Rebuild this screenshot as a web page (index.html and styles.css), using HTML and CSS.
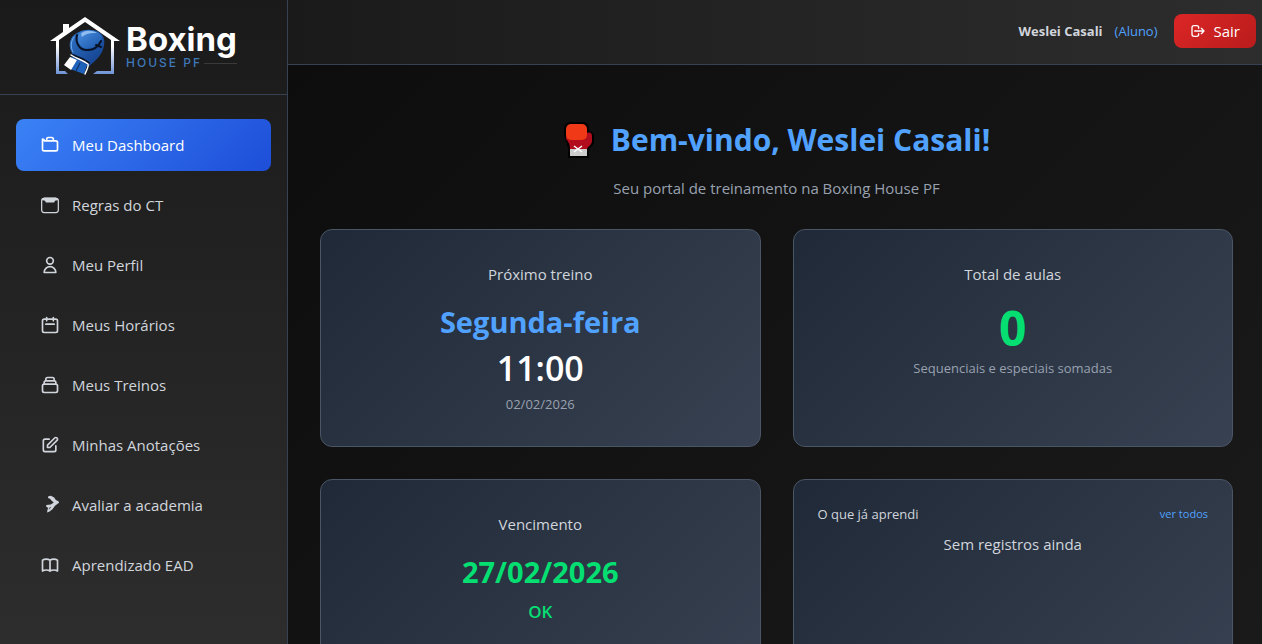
FILE: index.html
```html
<!DOCTYPE html>
<html lang="pt-BR">
<head>
    <meta charset="UTF-8">
    <meta name="viewport" content="width=device-width, initial-scale=1.0">
    <title>Boxing House PF</title>
    <link rel="stylesheet" href="styles.css">
</head>
<body>
    <div class="layout">
        <aside class="sidebar">
            <a href="#" class="logo">
                <svg class="logo-mark" viewBox="0 0 70 60" aria-hidden="true">
                    <defs>
                        <linearGradient id="house" x1="0" y1="0" x2="0" y2="1">
                            <stop offset="0.5" stop-color="#ffffff"/>
                            <stop offset="1" stop-color="#6f93d6"/>
                        </linearGradient>
                        <linearGradient id="glove" x1="0" y1="0" x2="1" y2="1">
                            <stop offset="0" stop-color="#2f74c8"/>
                            <stop offset="1" stop-color="#103a86"/>
                        </linearGradient>
                        <linearGradient id="knuckles" x1="0" y1="0" x2="1" y2="1">
                            <stop offset="0" stop-color="#4a90e0"/>
                            <stop offset="1" stop-color="#1a54a8"/>
                        </linearGradient>
                    </defs>
                    <path fill="url(#house)" d="M35 0 L70 24 H64 V57 H43 L47 54 H61 V23 L35 5 L9 23 V54 H15 L18 57 H6 V24 H0 L13 15 V7 H19 V11 Z"/>
                    <path fill="url(#glove)" d="M27 16 C20 19 18 28 21 34 C23 37 22 39 21 41 L38 50 C45 44 53 38 54 28 C55 24 54 19 50 16 C45 12 34 12 29 15 Z"/>
                    <path fill="url(#knuckles)" d="M28 19 C30 12 45 12 50 17 C53 20 52 25 48 28 C43 32 35 33 31 29 C28 27 27 23 28 19 Z"/>
                    <path fill="#8fbdf2" d="M31 17 C34 13 42 13 47 16 C42 16 36 16 32 20 Z"/>
                    <path fill="none" stroke="#081226" stroke-width="2" stroke-linecap="round" stroke-linejoin="round" d="M27 18 C25 26 30 34 38 33 C43 33 48 30 51 24 M46 28 L51 30"/>
                    <path fill="none" stroke="#78b0ee" stroke-width="1" stroke-linecap="round" d="M24 20 C21 24 20 30 23 35"/>
                    <path fill="#1f62bb" d="M24 41 L37 48 L34 57 L20 52 Z"/>
                    <path fill="none" stroke="#0b2350" stroke-width="1" d="M30 46 L26 54"/>
                    <path fill="#ffffff" d="M20 40 L27 43 L21 53 L14 48 Z"/>
                    <path fill="none" stroke="#081226" stroke-width="3" d="M22 38 C28 41 36 43 39 47"/>
                    <path fill="none" stroke="#ffffff" stroke-width="1.4" stroke-linecap="round" d="M21 38 C27 42 33 43 38 47 C39 50 36 54 35 57"/>
                </svg>
                <span class="logo-text">
                    <span class="logo-name">Boxing</span>
                    <span class="logo-sub">HOUSE PF</span>
                </span>
            </a>
            <nav class="menu">
                <a href="#" class="menu-item active">
                    <svg class="icon" viewBox="0 0 24 24"><path d="M3 7v10a2 2 0 002 2h14a2 2 0 002-2V9a2 2 0 00-2-2H5a2 2 0 00-2-2zM8 5a2 2 0 012-2h4a2 2 0 012 2v2H8V5z"/></svg>
                    <span>Meu Dashboard</span>
                </a>
                <a href="#" class="menu-item">
                    <svg class="icon" viewBox="0 0 24 24"><rect class="thin" x="2" y="4" width="20" height="17" rx="3"/><path class="solid" d="M5 3H19Q21 3 22 6L18 7L17 9H7L6 7L2 6Q3 3 5 3Z"/></svg>
                    <span>Regras do CT</span>
                </a>
                <a href="#" class="menu-item">
                    <svg class="icon" viewBox="0 0 24 24"><path d="M16 7a4 4 0 11-8 0 4 4 0 018 0zM12 14a7 7 0 00-7 7h14a7 7 0 00-7-7z"/></svg>
                    <span>Meu Perfil</span>
                </a>
                <a href="#" class="menu-item">
                    <svg class="icon" viewBox="0 0 24 24"><path d="M8 7V3m8 4V3m-9 8h10M5 21h14a2 2 0 002-2V7a2 2 0 00-2-2H5a2 2 0 00-2 2v12a2 2 0 002 2z"/></svg>
                    <span>Meus Horários</span>
                </a>
                <a href="#" class="menu-item">
                    <svg class="icon" viewBox="0 0 24 24"><path d="M19 11H5m14 0a2 2 0 012 2v6a2 2 0 01-2 2H5a2 2 0 01-2-2v-6a2 2 0 012-2m14 0V9a2 2 0 00-2-2M5 11V9a2 2 0 012-2m0 0V5a2 2 0 012-2h6a2 2 0 012 2v2M7 7h10"/></svg>
                    <span>Meus Treinos</span>
                </a>
                <a href="#" class="menu-item">
                    <svg class="icon" viewBox="0 0 24 24"><path d="M11 5H6a2 2 0 00-2 2v11a2 2 0 002 2h11a2 2 0 002-2v-5m-1.414-9.414a2 2 0 112.828 2.828L11.828 15H9v-2.828l8.586-8.586z"/></svg>
                    <span>Minhas Anotações</span>
                </a>
                <a href="#" class="menu-item">
                    <svg class="icon" viewBox="0 0 24 24"><path class="solid" d="M10 1.500L13 1L17 3L19 6L22 7.500Q23.500 9 22 10L18 13L15 17L11 20L8.500 21L9 17.500L10 15.500L7.500 14V12L13 11.500L16.500 9L14 7L12 4.500L9.500 3.500ZM10.500 18L13 15L12 14Z"/></svg>
                    <span>Avaliar a academia</span>
                </a>
                <a href="#" class="menu-item">
                    <svg class="icon" viewBox="0 0 24 24"><path d="M12 6.253v13m0-13C10.832 5.477 9.246 5 7.5 5S4.168 5.477 3 6.253v13C4.168 18.477 5.754 18 7.5 18s3.332.477 4.5 1.253m0-13C13.168 5.477 14.754 5 16.5 5c1.747 0 3.332.477 4.5 1.253v13C19.832 18.477 18.247 18 16.5 18c-1.746 0-3.332.477-4.5 1.253"/></svg>
                    <span>Aprendizado EAD</span>
                </a>
            </nav>
        </aside>

        <div class="page">
            <header class="topbar">
                <span class="user-name">Weslei Casali</span>
                <span class="user-role">(Aluno)</span>
                <button type="button" class="logout">
                    <svg class="icon icon-small" viewBox="0 0 24 24"><path d="M17 16l4-4m0 0l-4-4m4 4H7m6 4v1a3 3 0 01-3 3H6a3 3 0 01-3-3V7a3 3 0 013-3h4a3 3 0 013 3v1"/></svg>
                    Sair
                </button>
            </header>

            <main class="content">
                <div class="welcome">
                    <h1>
                        <svg class="glove" viewBox="0 0 32 38" aria-hidden="true">
                            <path fill="#000000" d="M7 1H20Q25 1 26 6V10Q31 11 31 16V21Q31 24 26 28V37H5V27Q4 22 2 18Q1 16 1 8Q1 1 7 1Z"/>
                            <path fill="#b10d1c" d="M3 16H23V12Q29 10 29 15V20Q29 23 25 26L24 28H7Q7 22 3 18Z"/>
                            <rect fill="#f03a17" x="3" y="3" width="21" height="16" rx="5"/>
                            <path fill="#cccccc" d="M7 28H24V35H7Z"/>
                            <path fill="none" stroke="#ffffff" stroke-width="1.5" d="M11 25L19 31M19 25L11 31"/>
                        </svg>
                        Bem-vindo, Weslei Casali!
                    </h1>
                    <p>Seu portal de treinamento na Boxing House PF</p>
                </div>

                <div class="cards">
                    <section class="card">
                        <h2 class="card-title">Próximo treino</h2>
                        <p class="highlight blue">Segunda-feira</p>
                        <p class="hour">11:00</p>
                        <p class="note">02/02/2026</p>
                    </section>
                    <section class="card">
                        <h2 class="card-title">Total de aulas</h2>
                        <p class="total green">0</p>
                        <p class="note">Sequenciais e especiais somadas</p>
                    </section>
                    <section class="card">
                        <h2 class="card-title">Vencimento</h2>
                        <p class="highlight green">27/02/2026</p>
                        <p class="status green">OK</p>
                    </section>
                    <section class="card card-list">
                        <div class="card-head">
                            <h2>O que já aprendi</h2>
                            <a href="#">ver todos</a>
                        </div>
                        <p class="empty">Sem registros ainda</p>
                    </section>
                </div>
            </main>
        </div>
    </div>
</body>
</html>
```
FILE: styles.css
```css
* {
    box-sizing: border-box;
}

body {
    margin: 0;
    font-family: "Open Sans", "Noto Sans", sans-serif;
    font-size: 15px;
    line-height: 24px;
    color: #d1d5dc;
    background: #0f0f0f;
}

h1, h2, p {
    margin: 0;
}

a {
    color: inherit;
    text-decoration: none;
}

.layout {
    display: flex;
    height: 100vh;
}

/* sidebar */
.sidebar {
    width: 288px;
    flex-shrink: 0;
    background: linear-gradient(180deg, #1a1a1a, #2d2d2d);
    border-right: 1px solid #364153;
}

.logo {
    display: flex;
    align-items: center;
    justify-content: center;
    gap: 6px;
    height: 95px;
    border-bottom: 1px solid #364153;
}

.logo-mark {
    width: 70px;
    height: 60px;
}

.logo-text {
    display: flex;
    flex-direction: column;
    font-family: Inter, "Open Sans", sans-serif;
}

.logo-name {
    font-size: 33px;
    line-height: 32px;
    font-weight: 700;
    color: #ffffff;
}

.logo-sub {
    display: flex;
    align-items: center;
    gap: 2px;
    font-size: 12px;
    line-height: 16px;
    font-weight: 500;
    letter-spacing: 2px;
    color: #3f78b8;
}

.logo-sub::after {
    content: "";
    flex: 1;
    height: 1px;
    background: #3a3a3a;
}

.menu {
    display: flex;
    flex-direction: column;
    gap: 8px;
    padding: 24px 16px;
}

.menu-item {
    display: flex;
    align-items: center;
    gap: 12px;
    padding: 14px 24px;
    border-radius: 8px;
}

.menu-item.active {
    color: #ffffff;
    background: linear-gradient(135deg, #3b82f6, #1d4ed8);
}

.icon {
    width: 20px;
    height: 20px;
    fill: none;
    stroke: currentColor;
    stroke-width: 2;
    stroke-linecap: round;
    stroke-linejoin: round;
}

.icon-small {
    width: 16px;
    height: 16px;
}

.icon .solid {
    fill: currentColor;
    fill-rule: evenodd;
    stroke: none;
}

.icon .thin {
    stroke-width: 1.5;
}

/* top bar */
.page {
    flex: 1;
    min-width: 0;
    display: flex;
    flex-direction: column;
}

.topbar {
    display: flex;
    align-items: center;
    justify-content: flex-end;
    height: 65px;
    padding: 0 6px 2px;
    flex-shrink: 0;
    background: linear-gradient(90deg, #1a1a1a, #2d2d2d);
    border-bottom: 1px solid #364153;
}

.user-name {
    font-size: 13px;
    font-weight: 700;
    margin-right: 12px;
}

.user-role {
    font-size: 13px;
    color: #51a2ff;
    margin-right: 16px;
}

.logout {
    display: flex;
    align-items: center;
    gap: 8px;
    padding: 5px 16px;
    border: none;
    border-radius: 8px;
    font: inherit;
    color: #ffffff;
    background: linear-gradient(135deg, #dc2626, #b91c1c);
    cursor: pointer;
}

/* dashboard */
.content {
    flex: 1;
    overflow-y: auto;
    scrollbar-width: none;
    padding: 32px 29px 32px 32px;
    background: linear-gradient(135deg, #0d0d0d, #1a1a1a);
}

.welcome {
    padding: 23px 0 29px;
    text-align: center;
}

.welcome h1 {
    display: flex;
    align-items: center;
    justify-content: center;
    gap: 16px;
    font-size: 30px;
    line-height: 40px;
    font-weight: 700;
    color: #51a2ff;
}

.glove {
    width: 32px;
    height: 38px;
}

.welcome p {
    margin-top: 16px;
    color: #99a1af;
}

.cards {
    display: grid;
    grid-template-columns: 1fr 1fr;
    grid-auto-rows: 1fr;
    gap: 32px;
}

.card {
    padding: 32px;
    text-align: center;
    border: 1px solid #4a5565;
    border-radius: 12px;
    background: linear-gradient(135deg, #1f2937, #374151);
}

.card-title {
    font-size: 15px;
    font-weight: 400;
    margin-bottom: 18px;
}

.highlight {
    font-size: 29px;
    line-height: 36px;
    font-weight: 700;
    margin-bottom: 8px;
}

.hour {
    font-size: 34px;
    line-height: 40px;
    font-weight: 600;
    color: #ffffff;
    margin-bottom: 6px;
}

.total {
    font-size: 48px;
    line-height: 48px;
    font-weight: 700;
    margin-bottom: 6px;
}

.status {
    font-size: 17px;
    line-height: 28px;
    font-weight: 600;
}

.note {
    font-size: 13px;
    line-height: 20px;
    color: #99a1af;
}

.blue {
    color: #51a2ff;
}

.green {
    color: #05df72;
}

.card-list {
    padding: 24px;
}

.card-head {
    display: flex;
    align-items: center;
    justify-content: space-between;
    margin-bottom: 8px;
    line-height: 20px;
}

.card-head h2 {
    font-size: 13px;
    font-weight: 400;
}

.card-head a {
    font-size: 11px;
    color: #51a2ff;
}
```
